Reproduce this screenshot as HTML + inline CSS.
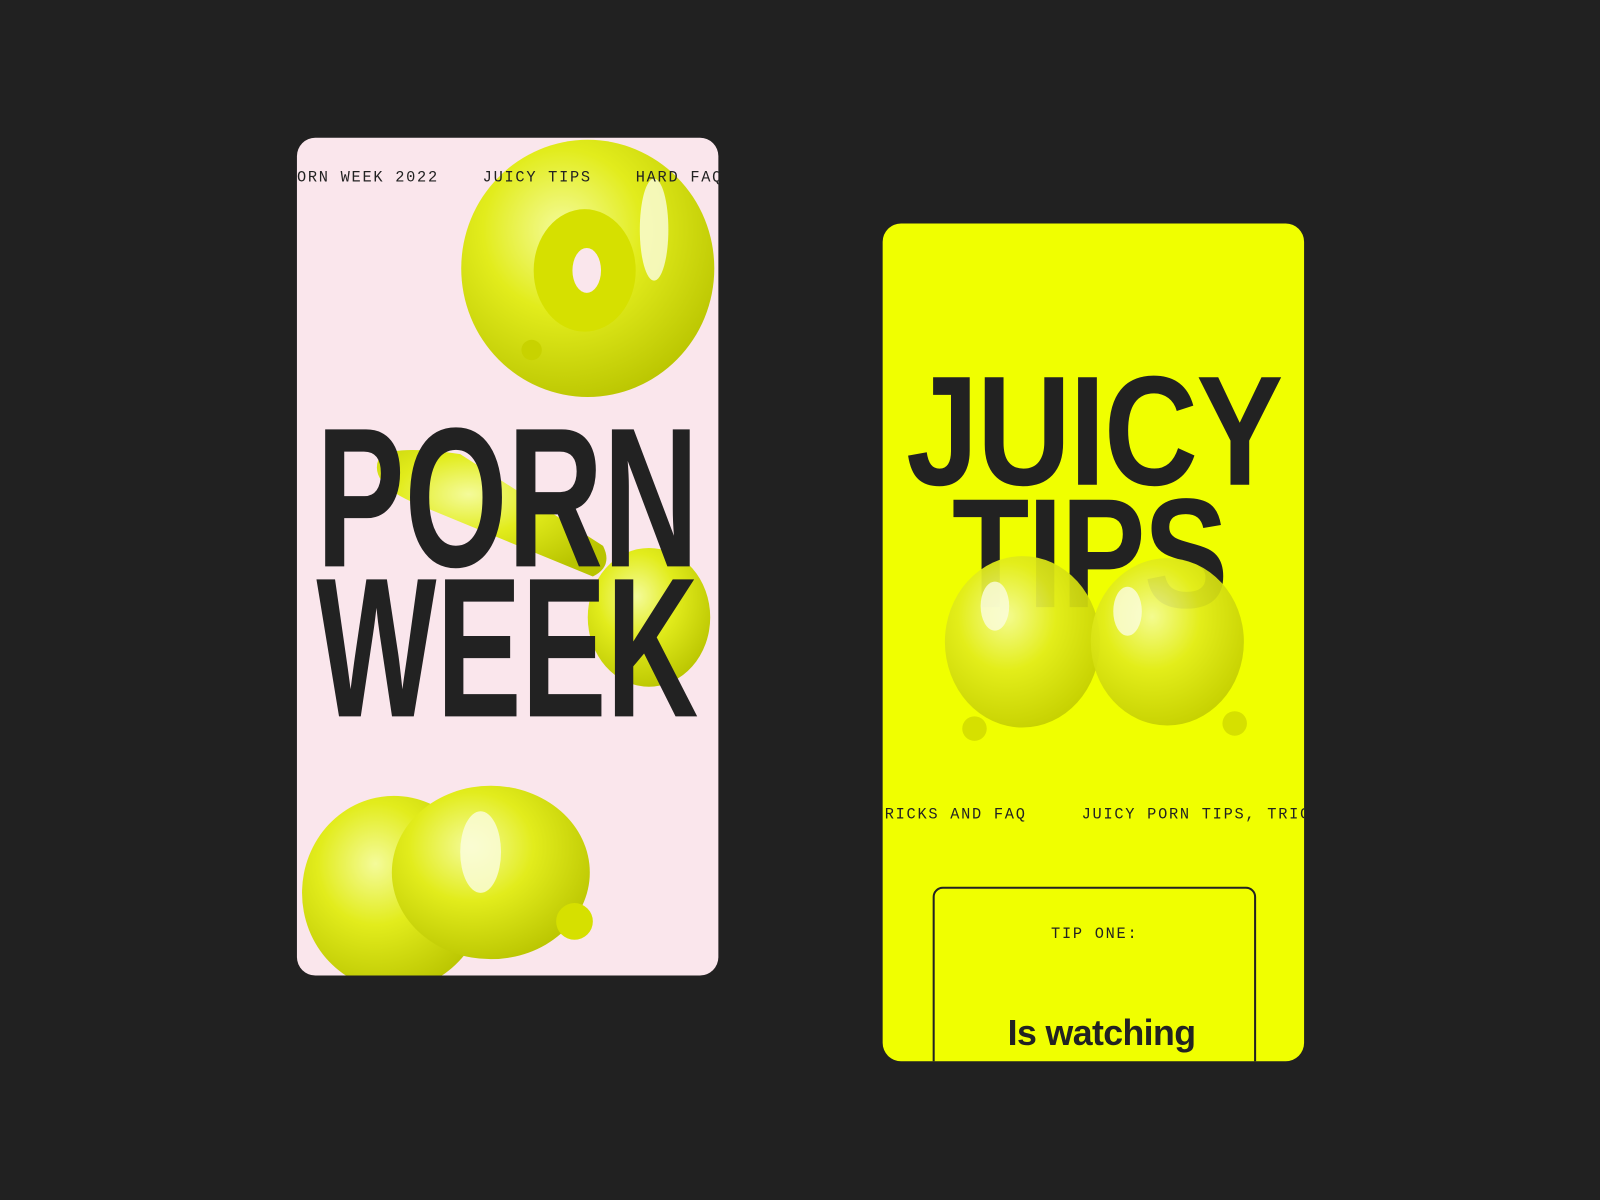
<!DOCTYPE html>
<html><head><meta charset="utf-8"><style>
html,body{margin:0;padding:0;background:#212121;width:1600px;height:1200px;overflow:hidden}
#w{position:absolute;left:0;top:0;width:1568px;height:1176px;transform:scale(1.020408);transform-origin:0 0}
.card{position:absolute;width:413px;height:821px;border-radius:18px;overflow:hidden}
.mono{font-family:"Liberation Mono",monospace;font-size:15px;color:#222;position:absolute;white-space:nowrap;letter-spacing:1.7px;z-index:5}
.big{position:absolute;font-family:"Liberation Sans",sans-serif;font-weight:bold;color:#222;white-space:nowrap;transform-origin:0 0;line-height:1}
svg{position:absolute;left:0;top:0}
</style></head><body><div id="w">
<div class="card" style="left:291px;top:135px;background:#fae6ec">
 <svg width="413" height="821">
  <defs>
   <radialGradient id="g1" cx="40%" cy="35%" r="70%"><stop offset="0" stop-color="#f4fb9a"/><stop offset=".45" stop-color="#e2ec1c"/><stop offset="1" stop-color="#b9c400"/></radialGradient>
  </defs>
  <ellipse cx="285" cy="128" rx="124" ry="126" fill="url(#g1)"/>
  <ellipse cx="282" cy="130" rx="50" ry="60" fill="#d6e000"/>
  <ellipse cx="284" cy="130" rx="14" ry="22" fill="#fae6ec"/>
  <ellipse cx="350" cy="90" rx="14" ry="50" fill="#fbfde0" opacity=".8"/>
  <circle cx="230" cy="208" r="10" fill="#c8d200"/>
  <path d="M80 315 Q90 300 160 310 L300 400 Q310 420 290 430 L120 360 Q70 340 80 315Z" fill="url(#g1)"/>
  <ellipse cx="345" cy="470" rx="60" ry="68" fill="url(#g1)"/>
  <ellipse cx="95" cy="740" rx="90" ry="95" fill="url(#g1)"/>
  <ellipse cx="190" cy="720" rx="97" ry="85" fill="url(#g1)"/>
  <ellipse cx="180" cy="700" rx="20" ry="40" fill="#fbfde0" opacity=".8"/>
  <circle cx="272" cy="768" r="18" fill="#d6e000"/>
 </svg>
 <div class="mono" style="left:0;top:31px">ORN WEEK 2022</div>
 <div class="mono" style="left:182px;top:31px">JUICY TIPS</div>
 <div class="mono" style="left:332px;top:31px">HARD FAQ</div>
 <div class="big" style="left:19px;top:256px;font-size:195px;transform:scaleX(.665)">PORN</div>
 <div class="big" style="left:19px;top:403px;font-size:195px;transform:scaleX(.64)">WEEK</div>
</div>
<div class="card" style="left:865px;top:219px;background:#f0ff00">
 <div class="big" style="left:23px;top:127px;font-size:153px;transform:scaleX(.835);letter-spacing:-2px">JUICY</div>
 <div class="big" style="left:68px;top:247px;font-size:153px;transform:scaleX(.81);letter-spacing:-2px">TIPS</div>
 <svg width="413" height="821">
  <defs>
   <radialGradient id="g2" cx="40%" cy="35%" r="70%"><stop offset="0" stop-color="#f4fb9a"/><stop offset=".45" stop-color="#e2ec1c"/><stop offset="1" stop-color="#c2cc00"/></radialGradient>
  </defs>
  <ellipse cx="137" cy="410" rx="76" ry="84" fill="url(#g2)" opacity=".93"/>
  <ellipse cx="279" cy="410" rx="75" ry="82" fill="url(#g2)" opacity=".93"/>
  <ellipse cx="110" cy="375" rx="14" ry="24" fill="#fbfde0" opacity=".8"/>
  <ellipse cx="240" cy="380" rx="14" ry="24" fill="#fbfde0" opacity=".8"/>
  <circle cx="90" cy="495" r="12" fill="#d6e000"/>
  <circle cx="345" cy="490" r="12" fill="#d6e000"/>
 </svg>
 <div class="mono" style="left:2px;top:571px">RICKS AND FAQ</div>
 <div class="mono" style="left:195px;top:571px">JUICY PORN TIPS, TRICKS</div>
 <div style="position:absolute;left:49px;top:650px;width:313px;height:200px;border:2px solid #222;border-radius:10px"></div>
 <div class="mono" style="left:165px;top:688px">TIP ONE:</div>
 <div style="position:absolute;left:8px;width:413px;text-align:center;top:774px;font-family:'Liberation Sans',sans-serif;font-weight:bold;font-size:35px;letter-spacing:-0.6px;color:#222">Is watching</div>
</div>
</div></body></html>
